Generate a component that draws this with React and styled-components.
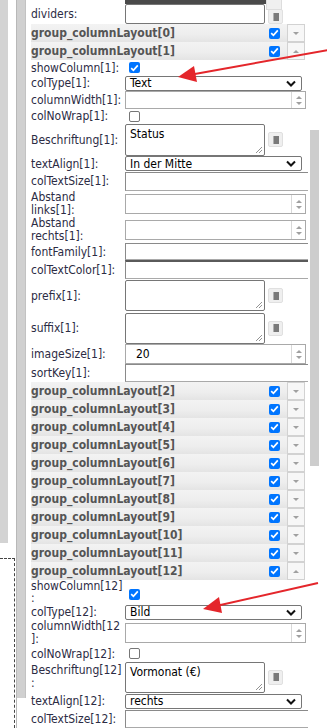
import React from 'react';
import styled, { createGlobalStyle } from 'styled-components';

// Base page styles: no margin, Tahoma-like condensed sans
const GlobalStyle = createGlobalStyle`
  body {
    margin: 0;
    background: #fff;
    font-family: "DejaVu Sans Condensed", "DejaVu Sans", sans-serif;
    font-size: 12px;
    color: #2c2c44;
  }
`;

const Page = styled.div`
  position: relative;
  display: flex;
  width: 327px;
  height: 728px;
  overflow: hidden;
`;

// Left gutters (outer page frame + panel border)
const OuterGutter = styled.div`
  width: 16px;
  flex-shrink: 0;
  display: flex;
  flex-direction: column;
`;

const GrayStrip = styled.div`
  width: 8px;
  height: 543px;
  background: #d3d3d3;
`;

const DashedBox = styled.div`
  margin-top: 15px;
  width: 14px;
  flex: 1;
  border-top: 1px dashed #444;
  border-right: 1px dashed #444;
`;

const InnerGutter = styled.div`
  width: 10px;
  flex-shrink: 0;
  border-left: 1px solid #b8b8b8;
`;

const InnerBar = styled.div`
  width: 8px;
  height: 698px;
  background: #d0d0d0;
  border-right: 1px solid #c2c2c2;
`;

const Main = styled.div`
  margin-left: 4px;
  width: 278px;
  flex-shrink: 0;
  display: flex;
  flex-direction: column;
`;

const ScrollTrack = styled.div`
  width: 12px;
  padding: 130px 0 0 1px;
`;

const ScrollThumb = styled.div`
  width: 9px;
  height: 336px;
  background: #cdcdcd;
`;

// Form rows
const Row = styled.div`
  display: grid;
  grid-template-columns: 94px 1fr;
  align-items: center;
  height: ${({ $h }) => $h}px;
`;

const Label = styled.div`
  line-height: ${({ $lh }) => $lh ?? 14}px;
  white-space: pre-line;
`;

const Field = styled.div`
  display: flex;
  align-items: center;
  gap: 3px;
`;

const TopStubField = styled.div`
  display: flex;
  align-items: flex-start;
  height: 4px;
`;

const DarkBar = styled.div`
  width: 141px;
  height: 4px;
  background: #4a4a4a;
`;

const StubButton = styled.div`
  width: 16px;
  height: 10px;
  background: #f0f0f0;
  border: 1px solid #ddd;
  border-top: none;
  box-sizing: border-box;
  position: relative;
  z-index: 1;
`;

const Select = styled.div`
  width: 177px;
  height: 15px;
  box-sizing: border-box;
  border: 1px solid #767676;
  border-radius: 2px;
  display: flex;
  align-items: center;
  justify-content: space-between;
  padding: 0 5px 0 4px;
  color: #000;
  background: #fff;
`;

const NumberBox = styled.div`
  width: 181px;
  height: ${({ $h }) => $h}px;
  box-sizing: border-box;
  border: 1px solid #a9a9a9;
  display: flex;
  align-items: stretch;
  color: #000;
`;

const NumberValue = styled.div`
  flex: 1;
  display: flex;
  align-items: center;
  padding-left: 10px;
`;

const Spinner = styled.div`
  width: 13px;
  border-left: 1px solid #d8d8d8;
  display: flex;
  flex-direction: column;
  align-items: center;
  justify-content: center;
  gap: 3px;
`;

const Tri = styled.span`
  width: 0;
  height: 0;
  border-left: 3px solid transparent;
  border-right: 3px solid transparent;
  ${({ $up }) => ($up ? 'border-bottom: 3px solid #a0a0a0;' : 'border-top: 3px solid #a0a0a0;')}
`;

const TextBox = styled.div`
  width: 183px;
  height: ${({ $h }) => $h}px;
  box-sizing: border-box;
  border-left: 1px solid #8a8a8a;
  border-top: ${({ $dark }) => ($dark ? '2px solid #5a5a5a' : '1px solid #8a8a8a')};
  border-bottom: 1px solid #a9a9a9;
`;

const TextArea = styled.div`
  position: relative;
  width: 140px;
  height: ${({ $h }) => $h}px;
  box-sizing: border-box;
  border: 1px solid #767676;
  border-radius: 2px;
  padding: 2px 4px;
  color: #000;
`;

const Grip = styled.svg`
  position: absolute;
  right: 1px;
  bottom: 1px;
`;

const IconButton = styled.div`
  width: 15px;
  height: 15px;
  box-sizing: border-box;
  background: #efefef;
  border: 1px solid #e0e0e0;
  border-radius: 2px;
  display: flex;
  align-items: center;
  justify-content: center;
  align-self: ${({ $top }) => ($top ? 'flex-start' : 'center')};
  margin-top: ${({ $top }) => ($top ? '5px' : '0')};
`;

const BookIcon = styled.span`
  width: 5px;
  height: 8px;
  background: #7a7a7a;
  border-left: 1px solid #b0b0b0;
`;

const Check = styled.span`
  width: 11px;
  height: 11px;
  box-sizing: border-box;
  border-radius: 2px;
  display: inline-flex;
  align-items: center;
  justify-content: center;
  margin-left: ${({ $ml }) => $ml ?? 4}px;
  margin-top: ${({ $mt }) => $mt ?? 0}px;
  background: ${({ $on }) => ($on ? '#0075ff' : '#fff')};
  border: ${({ $on }) => ($on ? 'none' : '1px solid #767676')};
`;

// Group header rows
const GroupRow = styled.div`
  height: 18px;
  margin-right: 4px;
  display: flex;
  align-items: center;
  background: linear-gradient(#f3f3f3 0%, #eeeeee 55%, #e4e4e4 100%);
`;

const GroupLabel = styled.div`
  flex: 1;
  font-weight: bold;
  color: #555;
`;

const DropButton = styled.div`
  width: 18px;
  height: 18px;
  box-sizing: border-box;
  margin-left: 7px;
  border: 1px solid #d2d2d2;
  background: #f7f7f7;
  display: flex;
  align-items: center;
  justify-content: center;
`;

const ArrowLayer = styled.svg`
  position: absolute;
  left: 0;
  top: 0;
  pointer-events: none;
`;

const Chevron = () => (
  <svg width="10" height="7" viewBox="0 0 10 7">
    <polyline points="1,1.5 5,5.5 9,1.5" fill="none" stroke="#111" strokeWidth="2" />
  </svg>
);

const CheckBox = ({ on, ml, mt }) => (
  <Check $on={on} $ml={ml} $mt={mt}>
    {on && (
      <svg width="9" height="8" viewBox="0 0 9 8">
        <polyline points="1.2,4.2 3.4,6.3 7.8,1.4" fill="none" stroke="#fff" strokeWidth="1.7" />
      </svg>
    )}
  </Check>
);

const Area = ({ h, text }) => (
  <>
    <TextArea $h={h}>
      {text}
      <Grip width="8" height="8" viewBox="0 0 8 8">
        <line x1="1" y1="7" x2="7" y2="1" stroke="#777" strokeWidth="0.8" />
        <line x1="4" y1="7" x2="7" y2="4" stroke="#777" strokeWidth="0.8" />
      </Grip>
    </TextArea>
    <IconButton>
      <BookIcon />
    </IconButton>
  </>
);

const Num = ({ h, value }) => (
  <NumberBox $h={h}>
    <NumberValue>{value}</NumberValue>
    <Spinner>
      <Tri $up />
      <Tri />
    </Spinner>
  </NumberBox>
);

const Group = ({ index, up }) => (
  <GroupRow>
    <GroupLabel>group_columnLayout[{index}]</GroupLabel>
    <CheckBox on ml={0} />
    <DropButton>
      <Tri $up={up} />
    </DropButton>
  </GroupRow>
);

const FormRow = ({ h, lh, label, children }) => (
  <Row $h={h}>
    <Label $lh={lh}>{label}</Label>
    <Field>{children}</Field>
  </Row>
);

const App = () => {
  const middleGroups = [2, 3, 4, 5, 6, 7, 8, 9, 10, 11];

  return (
    <>
      <GlobalStyle />
      <Page>
        <OuterGutter>
          <GrayStrip />
          <DashedBox />
        </OuterGutter>
        <InnerGutter>
          <InnerBar />
        </InnerGutter>
        <Main>
          <Row $h={4}>
            <span />
            <TopStubField>
              <DarkBar />
              <StubButton />
            </TopStubField>
          </Row>
          <Row $h={20}>
            <Label>dividers:</Label>
            <Field>
              <TextArea $h={20} />
              <IconButton $top>
                <BookIcon />
              </IconButton>
            </Field>
          </Row>
          <Group index={0} />
          <Group index={1} up />

          <FormRow h={15} label="showColumn[1]:">
            <CheckBox on />
          </FormRow>
          <FormRow h={16} label="colType[1]:">
            <Select>
              Text <Chevron />
            </Select>
          </FormRow>
          <FormRow h={18} label="columnWidth[1]:">
            <Num h={18} />
          </FormRow>
          <FormRow h={14} label="colNoWrap[1]:">
            <CheckBox />
          </FormRow>
          <FormRow h={33} label="Beschriftung[1]:">
            <Area h={32} text="Status" />
          </FormRow>
          <FormRow h={15} label="textAlign[1]:">
            <Select>
              In der Mitte <Chevron />
            </Select>
          </FormRow>
          <FormRow h={20} label="colTextSize[1]:">
            <TextBox $h={19} />
          </FormRow>
          <FormRow h={26} lh={13} label={'Abstand\nlinks[1]:'}>
            <Num h={20} />
          </FormRow>
          <FormRow h={26} lh={13} label={'Abstand\nrechts[1]:'}>
            <Num h={20} />
          </FormRow>
          <FormRow h={17} label="fontFamily[1]:">
            <TextBox $h={17} />
          </FormRow>
          <FormRow h={19} label="colTextColor[1]:">
            <TextBox $h={19} $dark />
          </FormRow>
          <FormRow h={33} label="prefix[1]:">
            <Area h={31} />
          </FormRow>
          <FormRow h={32} label="suffix[1]:">
            <Area h={31} />
          </FormRow>
          <FormRow h={20} label="imageSize[1]:">
            <Num h={20} value="20" />
          </FormRow>
          <FormRow h={18} label="sortKey[1]:">
            <TextBox $h={18} />
          </FormRow>

          {middleGroups.map((i) => (
            <Group key={i} index={i} />
          ))}
          <Group index={12} up />

          <FormRow h={24} lh={12} label={'showColumn[12]\n:'}>
            <CheckBox on mt={4} />
          </FormRow>
          <FormRow h={16} label="colType[12]:">
            <Select>
              Bild <Chevron />
            </Select>
          </FormRow>
          <FormRow h={26} lh={13} label={'columnWidth[12\n]:'}>
            <Num h={20} />
          </FormRow>
          <FormRow h={15} label="colNoWrap[12]:">
            <CheckBox />
          </FormRow>
          <FormRow h={32} lh={13} label={'Beschriftung[12]\n:'}>
            <Area h={31} text="Vormonat (€)" />
          </FormRow>
          <FormRow h={16} label="textAlign[12]:">
            <Select>
              rechts <Chevron />
            </Select>
          </FormRow>
          <FormRow h={19} label="colTextSize[12]:">
            <TextBox $h={18} />
          </FormRow>
        </Main>
        <ScrollTrack>
          <ScrollThumb />
        </ScrollTrack>

        {/* red annotation arrows drawn over the form */}
        <ArrowLayer width="327" height="728" viewBox="0 0 327 728">
          <line x1="328" y1="50" x2="192" y2="74.5" stroke="#e4262b" strokeWidth="2" />
          <polygon points="178,77 197,82 194,66" fill="#e4262b" />
          <line x1="318" y1="583" x2="216" y2="606" stroke="#e4262b" strokeWidth="2" />
          <polygon points="203,609 222,613 219,597" fill="#e4262b" />
        </ArrowLayer>
      </Page>
    </>
  );
};

export default App;
